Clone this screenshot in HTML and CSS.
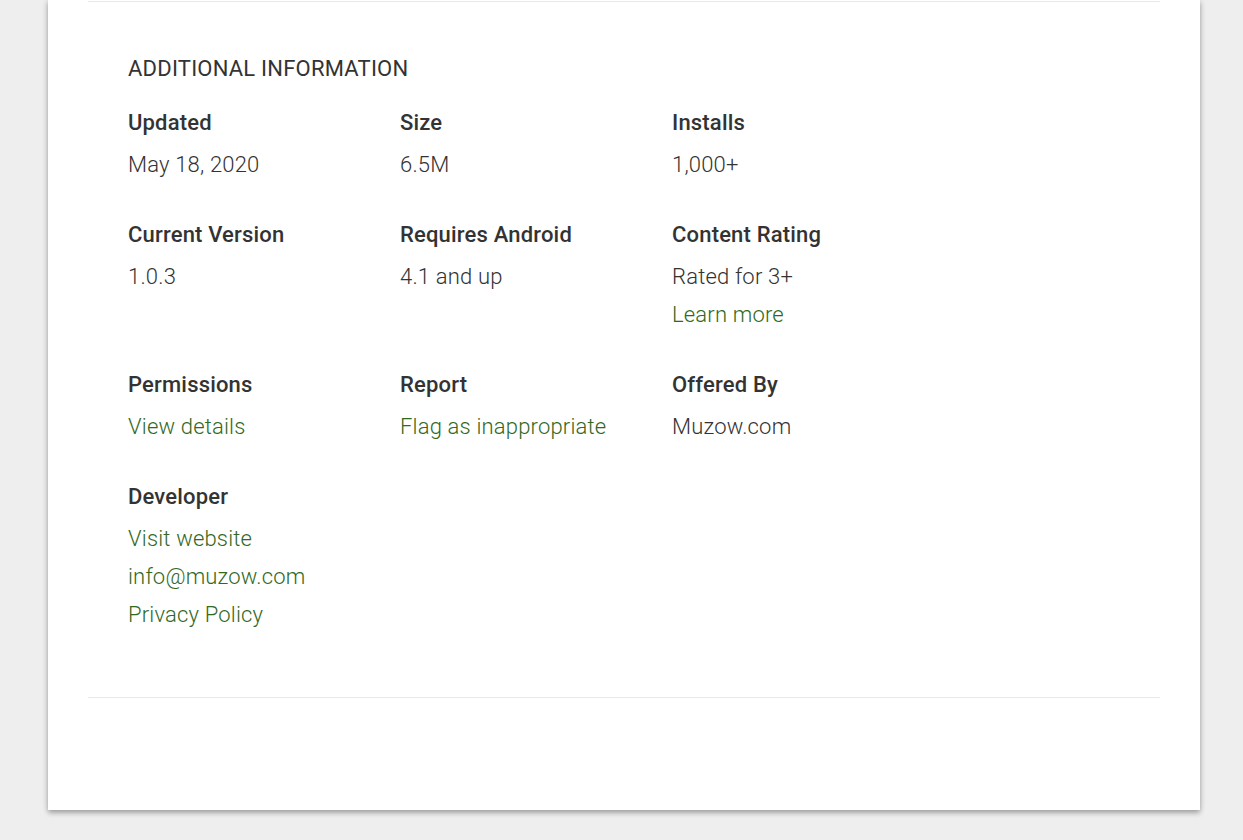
FILE: index.html
```html
<!DOCTYPE html>
<html lang="en">
<head>
<meta charset="utf-8">
<title>Additional Information</title>
<link rel="stylesheet" href="styles.css">
</head>
<body>
<div class="card">
  <div class="divider top"></div>
  <section class="info">
    <h2 class="title">ADDITIONAL INFORMATION</h2>
    <div class="grid">
      <div class="cell">
        <div class="label">Updated</div>
        <div class="value">May 18, 2020</div>
      </div>
      <div class="cell">
        <div class="label">Size</div>
        <div class="value">6.5M</div>
      </div>
      <div class="cell">
        <div class="label">Installs</div>
        <div class="value">1,000+</div>
      </div>
      <div class="cell">
        <div class="label">Current Version</div>
        <div class="value">1.0.3</div>
      </div>
      <div class="cell">
        <div class="label">Requires Android</div>
        <div class="value">4.1 and up</div>
      </div>
      <div class="cell">
        <div class="label">Content Rating</div>
        <div class="value">Rated for 3+</div>
        <div class="value"><a class="link" href="#">Learn more</a></div>
      </div>
      <div class="cell">
        <div class="label">Permissions</div>
        <div class="value"><a class="link" href="#">View details</a></div>
      </div>
      <div class="cell">
        <div class="label">Report</div>
        <div class="value"><a class="link" href="#">Flag as inappropriate</a></div>
      </div>
      <div class="cell">
        <div class="label">Offered By</div>
        <div class="value">Muzow.com</div>
      </div>
      <div class="cell">
        <div class="label">Developer</div>
        <div class="value"><a class="link" href="#">Visit website</a></div>
        <div class="value"><a class="link" href="#">info@muzow.com</a></div>
        <div class="value"><a class="link" href="#">Privacy Policy</a></div>
      </div>
    </div>
  </section>
  <div class="divider bottom"></div>
</div>
</body>
</html>
```

FILE: styles.css
```css
html, body {
  margin: 0;
  padding: 0;
}

body {
  background: #eeeeee;
  font-family: Roboto, "Liberation Sans", Arial, sans-serif;
  color: #333333;
  height: 840px;
  overflow: hidden;
}

.card {
  width: 1152px;
  height: 810px;
  box-sizing: border-box;
  margin-left: 48px;
  padding: 1px 40px 0;
  background: #ffffff;
  box-shadow: 0 3px 5px rgba(0, 0, 0, 0.28), 0 0 6px rgba(0, 0, 0, 0.12);
}

.divider {
  height: 1px;
  background: #e8e8e8;
}

.info {
  padding: 55px 40px 63px;
}

.title {
  margin: 0 0 30px;
  font-size: 22px;
  line-height: 24px;
  font-weight: 400;
  color: #333333;
  letter-spacing: 0.22px;
}

.grid {
  display: grid;
  grid-template-columns: repeat(3, 272px);
  row-gap: 39px;
}

.label {
  font-size: 22px;
  line-height: 24px;
  font-weight: 500;
  color: #333333;
  letter-spacing: 0.18px;
  margin-bottom: 11px;
}

.value {
  font-size: 22px;
  line-height: 38px;
  font-weight: 300;
  color: #333333;
  letter-spacing: 0.18px;
}

.link {
  color: #33691e;
  text-decoration: none;
}
```
